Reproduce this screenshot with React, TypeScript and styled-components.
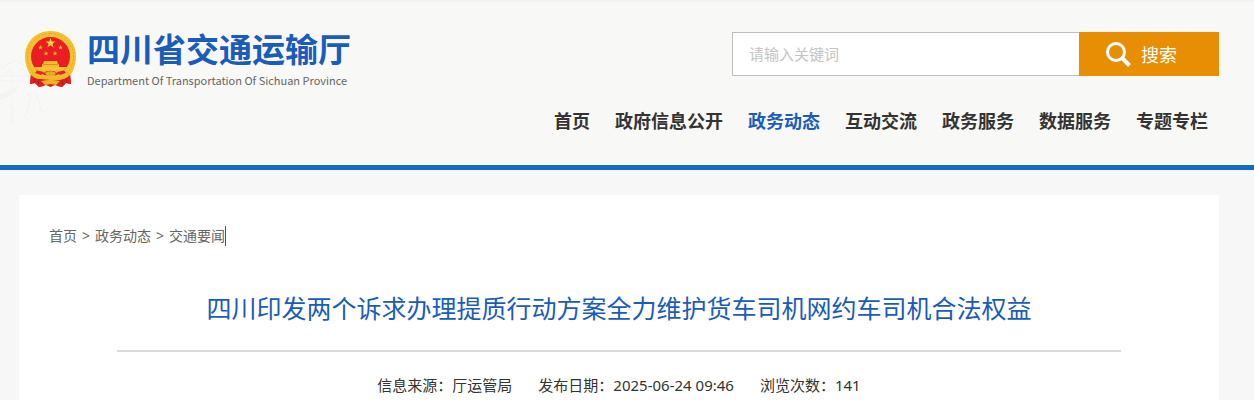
import React from 'react';
import styled, { createGlobalStyle } from 'styled-components';

const GlobalStyle = createGlobalStyle`
  * { box-sizing: border-box; }
  body {
    margin: 0;
    background: #f7f7f7;
    color: #333;
    font-family: "Noto Sans", "Noto Sans CJK SC", sans-serif;
    font-size: 15px;
  }
  a { color: inherit; text-decoration: none; }
`;

const Header = styled.header`
  position: relative;
  padding: 30px 35px 30px 19px;
  background: #f8f8f6;
  border-top: 2px solid #f3f3f3;
  border-bottom: 5px solid #176ac2;
`;

const Backdrop = styled.svg`
  position: absolute;
  left: 0;
  top: 54px;
`;

const HeaderInner = styled.div`
  position: relative;
  display: flex;
  justify-content: space-between;
  align-items: flex-start;
  max-width: 1200px;
  margin: 0 auto;
`;

const Brand = styled.a`
  display: flex;
  gap: 10px;
  padding-left: 5px;
  white-space: nowrap;
`;

const Emblem = styled.svg`
  flex: none;
  margin-top: -2px;
`;

const BrandText = styled.span`
  display: flex;
  flex-direction: column;
`;

const BrandName = styled.span`
  color: #1a5cba;
  font-family: "Liberation Sans", "Noto Sans CJK SC", sans-serif;
  font-size: 33px;
  font-weight: 700;
  line-height: 38px;
`;

const BrandSub = styled.span`
  color: #666;
  font-family: "Noto Sans CJK SC", sans-serif;
  font-size: 11px;
  line-height: 20px;
`;

const HeaderSide = styled.div`
  display: flex;
  flex-direction: column;
  align-items: flex-end;
  gap: 31px;
`;

const SearchForm = styled.form`
  display: flex;
  height: 44px;
`;

const SearchInput = styled.input`
  width: 347px;
  padding: 0 16px;
  border: 1px solid #bfbfbf;
  border-right: 0;
  border-radius: 0;
  outline: 0;
  background: #fff;
  color: #333;
  font: inherit;
  &::placeholder { color: #c4c4c4; opacity: 1; }
`;

const SearchButton = styled.button`
  display: flex;
  align-items: center;
  gap: 9px;
  width: 140px;
  padding: 0 0 0 26px;
  border: 0;
  background: #e88e04;
  color: #fff;
  font: inherit;
  font-size: 18px;
  cursor: pointer;
`;

const Nav = styled.nav`
  display: flex;
  gap: 25px;
  padding-right: 11px;
`;

const NavLink = styled.a<{ $active?: boolean }>`
  color: ${p => (p.$active ? '#1a5cba' : '#333')};
  font-size: 18px;
  font-weight: 700;
  line-height: 28px;
  white-space: nowrap;
`;

const Main = styled.main`
  padding: 25px 35px 0 19px;
`;

const Article = styled.article`
  max-width: 1200px;
  margin: 0 auto;
  padding: 31px 30px 3px;
  background: #fff;
`;

const Breadcrumb = styled.nav`
  display: flex;
  gap: 5px;
  color: #666;
  font-size: 14px;
  line-height: 20px;
`;

const Crumb = styled.a<{ $current?: boolean }>`
  border-right: ${p => (p.$current ? '1px solid #555' : '0')};
`;

const Title = styled.h1`
  margin: 43px 68px 0;
  padding-bottom: 23px;
  border-bottom: 2px solid #dbdbdb;
  color: #1a5cba;
  font-size: 25px;
  font-weight: 400;
  line-height: 38px;
  text-align: center;
`;

const Meta = styled.div`
  display: flex;
  justify-content: center;
  gap: 26px;
  padding-top: 21px;
  line-height: 24px;
`;

const navItems = ['首页', '政府信息公开', '政务动态', '互动交流', '政务服务', '数据服务', '专题专栏'];

const star = (cx: number, cy: number, r: number) =>
  Array.from({ length: 10 }, (_, i) => {
    const a = (Math.PI / 5) * i - Math.PI / 2;
    const d = i % 2 ? r * 0.4 : r;
    return `${cx + d * Math.cos(a)},${cy + d * Math.sin(a)}`;
  }).join(' ');

function NationalEmblem() {
  return (
    <Emblem width="53" height="58" viewBox="0 0 53 58" aria-hidden="true">
      <path d="M7 43L6 54L11 53L15 57L22 55L26.500 57L31 55L38 57L42 53L47 54L46 43Z" fill="#dc1b1c" />
      <path d="M26.500 1C12 1 1 12 1 26C1 35 4 42 8 47L45 47C49 42 52 35 52 26C52 12 41 1 26.500 1Z" fill="#f5c131" />
      <path d="M26.500 3.500C13 3.500 3.500 14 3.500 26C3.500 33 6 39 10 43" fill="none" stroke="#e3a526" strokeWidth="1" strokeDasharray="2 1.500" />
      <path d="M26.500 3.500C40 3.500 49.500 14 49.500 26C49.500 33 47 39 43 43" fill="none" stroke="#e3a526" strokeWidth="1" strokeDasharray="2 1.500" />
      <circle cx="26.500" cy="26.500" r="19.500" fill="#eb1c24" />
      <polygon points={star(26.5, 13.2, 5.2)} fill="#fbd83a" />
      <polygon points={star(16.5, 17.5, 2.6)} fill="#f9c02d" />
      <polygon points={star(36.5, 17.5, 2.6)} fill="#f9c02d" />
      <polygon points={star(22, 23.5, 2.6)} fill="#f9c02d" />
      <polygon points={star(31, 23.5, 2.6)} fill="#f9c02d" />
      <path d="M20 31H33L34 34H35V37H18V34H19Z" fill="#f3bd32" />
      <path d="M19 34.500H34" stroke="#da7622" strokeWidth="0.700" />
      <path d="M10 37H43L40 40.500L33 43C31 40 22 40 20 43L13 40.500Z" fill="#f7c335" />
      <path d="M13 40.500L20 42L17 45L11 43Z M40 40.500L33 42L36 45L42 43Z" fill="#e82321" />
      <path d="M21 43C23 40.500 30 40.500 32 43L30 46H23Z" fill="#e9a82a" />
      <path d="M8 41C12 46 19 46.500 26.500 46.500S41 46 45 41L46 46C41 50 34 51 26.500 50S12 50 7 46Z" fill="#f0b92b" />
      <path d="M7 45C12 50 18 51 23 50L20 56L15 57L11 53L6 54Z M46 45C41 50 35 51 30 50L33 56L38 57L42 53L47 54Z" fill="#df2020" />
      <path d="M11 48L10 53M15 50L14 55M42 48L43 53M38 50L39 55" stroke="#a91218" strokeWidth="0.800" />
      <path d="M17 51L26.500 49.500L36 51L32 55L26.500 54L21 55Z" fill="#efae2b" />
    </Emblem>
  );
}

export default function App() {
  return (
    <>
      <GlobalStyle />
      <Header>
        <Backdrop width="70" height="72" viewBox="0 0 70 72" fill="none" stroke="#f1f3f4" aria-hidden="true">
          <path d="M0 13L15 4L32 14M0 20H34M0 25H30M4 20L9 14L16 20L22 12L28 20" />
          <path d="M0 43Q12 39 18 30M0 40Q8 38 13 31" strokeWidth="2" />
          <path d="M10 42L14 47L10 51L14 56L10 61L14 66L10 68M32 36L25 62M36 36L42 56" />
        </Backdrop>
        <HeaderInner>
          <Brand href="#">
            <NationalEmblem />
            <BrandText>
              <BrandName>四川省交通运输厅</BrandName>
              <BrandSub>Department Of Transportation Of Sichuan Province</BrandSub>
            </BrandText>
          </Brand>
          <HeaderSide>
            <SearchForm role="search" onSubmit={e => e.preventDefault()}>
              <SearchInput type="text" aria-label="请输入关键词" placeholder="请输入关键词" />
              <SearchButton type="submit">
                <svg width="27" height="27" viewBox="0 0 27 27" fill="none" stroke="#fff" aria-hidden="true">
                  <circle cx="11" cy="11" r="8.500" strokeWidth="3" />
                  <path d="M17 17L24.500 24.500" strokeWidth="4" />
                </svg>
                搜索
              </SearchButton>
            </SearchForm>
            <Nav>
              {navItems.map(item => (
                <NavLink key={item} href="#" $active={item === '政务动态'}>{item}</NavLink>
              ))}
            </Nav>
          </HeaderSide>
        </HeaderInner>
      </Header>
      <Main>
        <Article>
          <Breadcrumb>
            <Crumb href="#">首页</Crumb>
            <span>&gt;</span>
            <Crumb href="#">政务动态</Crumb>
            <span>&gt;</span>
            <Crumb href="#" $current>交通要闻</Crumb>
          </Breadcrumb>
          <Title>四川印发两个诉求办理提质行动方案全力维护货车司机网约车司机合法权益</Title>
          <Meta>
            <span>信息来源：厅运管局</span>
            <span>发布日期：2025-06-24 09:46</span>
            <span>浏览次数：141</span>
          </Meta>
        </Article>
      </Main>
    </>
  );
}
